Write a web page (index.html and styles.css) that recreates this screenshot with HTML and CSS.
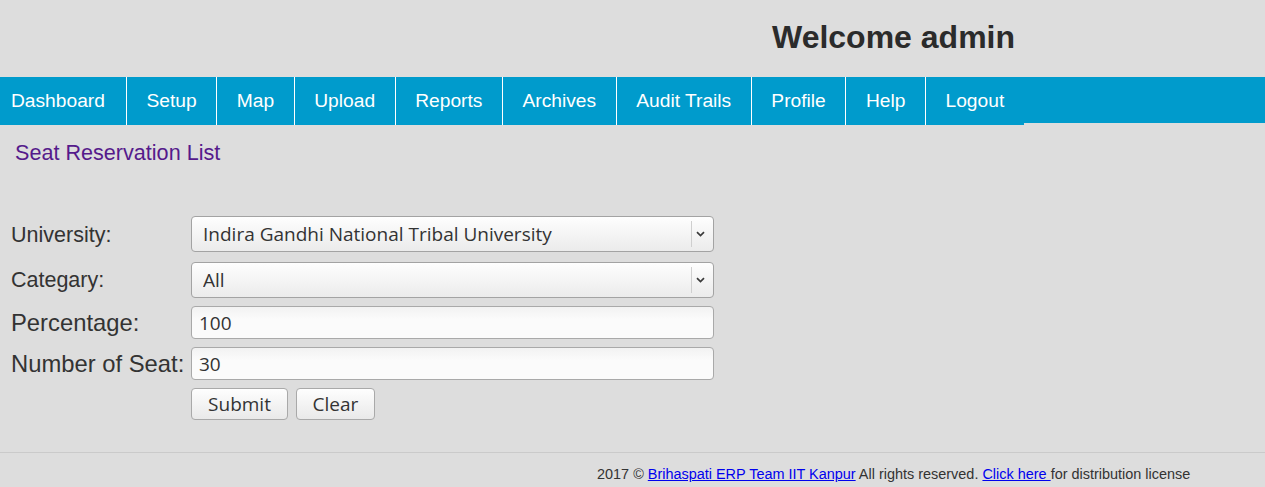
FILE: index.html
```html
<!DOCTYPE html>
<html lang="en">
<head>
<meta charset="utf-8">
<title>Seat Reservation List</title>
<link rel="stylesheet" href="styles.css">
</head>
<body>
<header class="top">
  <h1 class="welcome">Welcome admin</h1>
</header>
<nav class="menu">
  <ul class="menu-list">
    <li class="menu-item first"><a href="#">Dashboard</a></li>
    <li class="menu-item"><a href="#">Setup</a></li>
    <li class="menu-item"><a href="#">Map</a></li>
    <li class="menu-item"><a href="#">Upload</a></li>
    <li class="menu-item"><a href="#">Reports</a></li>
    <li class="menu-item"><a href="#">Archives</a></li>
    <li class="menu-item"><a href="#">Audit Trails</a></li>
    <li class="menu-item"><a href="#">Profile</a></li>
    <li class="menu-item"><a href="#">Help</a></li>
    <li class="menu-item"><a href="#">Logout</a></li>
  </ul>
</nav>
<main class="content">
  <h2 class="page-title">Seat Reservation List</h2>
  <form class="form-grid">
    <label class="lbl small">University:</label>
    <div class="select-wrap first-row">
      <select class="field select">
        <option>Indira Gandhi National Tribal University</option>
      </select>
      <span class="select-arrow"><svg width="9" height="6" viewBox="0 0 9 6"><path d="M1 1.2 L4.5 4.6 L8 1.2" fill="none" stroke="#3a3a3a" stroke-width="1.7"/></svg></span>
    </div>
    <label class="lbl small">Categary:</label>
    <div class="select-wrap">
      <select class="field select">
        <option>All</option>
      </select>
      <span class="select-arrow"><svg width="9" height="6" viewBox="0 0 9 6"><path d="M1 1.2 L4.5 4.6 L8 1.2" fill="none" stroke="#3a3a3a" stroke-width="1.7"/></svg></span>
    </div>
    <label class="lbl large">Percentage:</label>
    <input class="field text" type="text" value="100">
    <label class="lbl large">Number of Seat:</label>
    <input class="field text" type="text" value="30">
    <span class="lbl"></span>
    <div class="buttons">
      <button type="button" class="btn submit">Submit</button>
      <button type="button" class="btn clear">Clear</button>
    </div>
  </form>
</main>
<footer class="foot">
  <p class="foot-text">2017 © <a href="#">Brihaspati ERP Team IIT Kanpur</a> All rights reserved. <a href="#">Click here </a>for distribution license</p>
</footer>
</body>
</html>
```
FILE: styles.css
```css
* { box-sizing: border-box; }

body {
  margin: 0;
  background: #dddddd;
  font-family: "Liberation Sans", Arial, sans-serif;
  color: #333333;
}

.top {
  height: 77px;
  display: flex;
  align-items: flex-start;
  padding-left: 772px;
}

.welcome {
  margin: 0;
  padding-top: 17px;
  font-size: 32px;
  line-height: 40px;
  font-weight: bold;
  color: #2b2b2b;
}

.menu {
  height: 46px;
  background: #009bcc;
}

.menu-list {
  list-style: none;
  margin: 0;
  padding: 0;
  display: flex;
  align-items: flex-start;
}

.menu-item {
  height: 48px;
  background: #009bcc;
  border-left: 1px solid #ffffff;
}

.menu-item.first {
  border-left: none;
}

.menu-item a {
  display: block;
  padding: 0 19.58px;
  height: 48px;
  line-height: 48px;
  font-size: 19.2px;
  color: #ffffff;
  text-decoration: none;
}

.menu-item.first a {
  padding-left: 11px;
  padding-right: 21px;
}

.content {
  padding: 0 0 0 11px;
}

.page-title {
  margin: 18px 0 0 4px;
  font-size: 21.6px;
  line-height: 24px;
  font-weight: normal;
  color: #551a8b;
}

.form-grid {
  margin-top: 51px;
  display: grid;
  grid-template-columns: 180px 523px;
  row-gap: 8px;
  align-items: center;
}

.lbl {
  color: #333333;
  white-space: nowrap;
}

.lbl.small {
  font-size: 21.5px;
}

.lbl.large {
  font-size: 23.8px;
}

.select-wrap {
  position: relative;
  height: 36px;
}

.select-wrap.first-row {
  margin-bottom: 2px;
}

.field {
  font-family: "Open Sans", "Noto Sans", sans-serif;
  color: #333333;
  width: 523px;
  border: 1px solid #a9a9a9;
  border-radius: 4px;
  outline: none;
  margin: 0;
}

.select {
  -webkit-appearance: none;
  appearance: none;
  height: 36px;
  padding: 0 30px 0 11px;
  font-size: 19px;
  background: linear-gradient(#fefefe, #ebebeb);
  border-color: #a3a3a3;
}

.select-arrow {
  position: absolute;
  top: 5px;
  right: 0;
  width: 23px;
  height: 26px;
  border-left: 1px solid #cfcfcf;
  display: flex;
  align-items: center;
  padding-left: 4px;
  pointer-events: none;
}

.text {
  height: 33px;
  padding: 0 7px;
  font-size: 19px;
  background: linear-gradient(#f2f2f2, #fbfbfb 40%, #fbfbfb);
}

.buttons {
  display: flex;
  gap: 8px;
}

.btn {
  height: 32px;
  font-family: "Open Sans", "Noto Sans", sans-serif;
  font-size: 19px;
  color: #333333;
  background: linear-gradient(#fefefe, #e9e9e9);
  border: 1px solid #a9a9a9;
  border-radius: 4px;
  padding: 0;
  margin: 0;
}

.btn.submit { width: 97px; }
.btn.clear { width: 79px; }

.foot {
  margin-top: 32px;
  border-top: 1px solid #cacaca;
}

.foot-text {
  margin: 0;
  padding: 13px 0 0 597px;
  font-size: 14.45px;
  line-height: 17px;
  color: #333333;
}

.foot-text a {
  color: #0000ee;
  text-decoration: underline;
}
```
